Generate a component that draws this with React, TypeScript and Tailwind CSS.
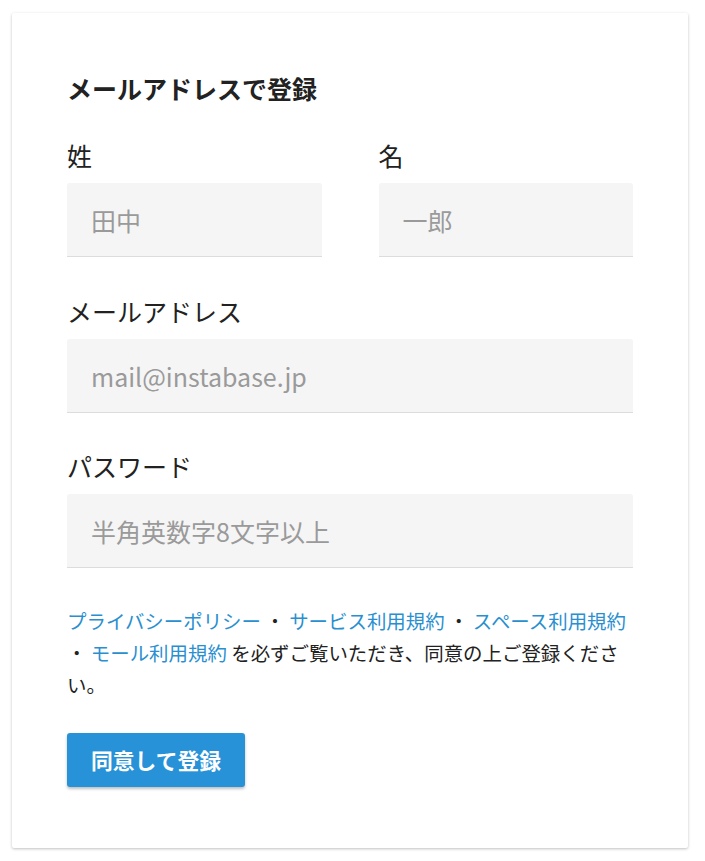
export default function App() {
  const font = { fontFamily: '"Noto Sans CJK JP", "Noto Sans", sans-serif' };
  return (
    <div className="min-h-screen bg-white pt-[13px] pl-[12px]" style={font}>
      <div className="w-[676px] rounded-[2px] bg-white px-[55px] pt-[52px] pb-[61px] text-[#222] shadow-[0_1px_3px_rgba(0,0,0,0.25)]">
        <h1 className="text-[25px] font-bold leading-[46px]">メールアドレスで登録</h1>

        <div className="mt-[28px] flex gap-[57px]">
          <Field label="姓" placeholder="田中" />
          <Field label="名" placeholder="一郎" />
        </div>

        <div className="mt-[38px]">
          <Field label="メールアドレス" placeholder="mail@instabase.jp" />
        </div>

        <div className="mt-[37px]">
          <Field label="パスワード" placeholder="半角英数字8文字以上" type="password" />
        </div>

        <p className="mt-[37px] text-[19.45px] leading-[32px] text-[#222]">
          <a className="text-[#2a8fd0]">プライバシーポリシー</a> ・ <a className="text-[#2a8fd0]">サービス利用規約</a> ・{' '}
          <a className="text-[#2a8fd0]">スペース利用規約</a> ・ <a className="text-[#2a8fd0]">モール利用規約</a>{' '}
          を必ずご覧いただき、同意の上ご登録ください。
        </p>

        <button className="mt-[32px] h-[54px] rounded-[3px] bg-[#2792d7] px-[24px] text-[21.8px] font-bold text-white shadow-[0_2px_3px_rgba(0,0,0,0.25)]">
          同意して登録
        </button>
      </div>
    </div>
  );
}

function Field({ label, placeholder, type = 'text' }: { label: string; placeholder: string; type?: string }) {
  return (
    <div className="flex-1">
      <label className="block text-[25px] leading-[32px] text-[#222]">{label}</label>
      <input
        type={type}
        placeholder={placeholder}
        className="mt-[12px] block h-[74px] w-full rounded-t-[3px] border-b border-[#dcdcdc] bg-[#f5f5f5] px-[24px] text-[25px] text-[#222] outline-none placeholder:text-[#9a9a9a]"
      />
    </div>
  );
}
